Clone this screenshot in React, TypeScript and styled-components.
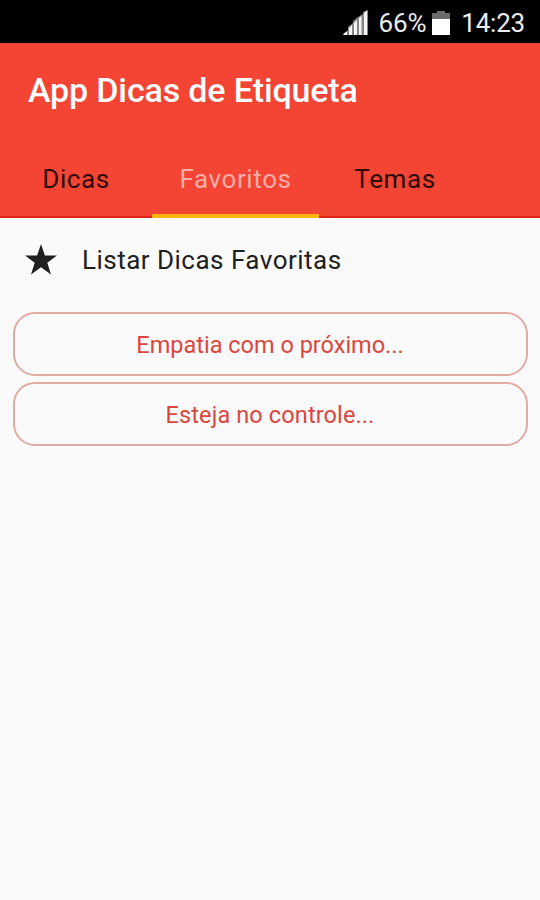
import React from "react";
import styled, { createGlobalStyle } from "styled-components";

const GlobalStyle = createGlobalStyle`
  * { box-sizing: border-box; }
  body { margin: 0; background: #fafafa; font-family: Roboto, "Liberation Sans", sans-serif; }
`;

const Screen = styled.div`
  display: flex;
  flex-direction: column;
  width: 540px;
  height: 900px;
  background: #fafafa;
  overflow: hidden;
`;

const StatusBar = styled.div`
  display: flex;
  align-items: center;
  justify-content: flex-end;
  height: 43px;
  padding: 3px 15px 0 0;
  background: #000;
  color: #ececec;
  font-size: 26px;
  line-height: 40px;
  white-space: nowrap;
`;

const Signal = styled.svg`
  width: 25px;
  height: 26px;
  margin: -1px 11px 0 0;
`;

const Battery = styled.svg`
  width: 18px;
  height: 26px;
  margin: -1px 11px 0 6px;
`;

const StatusText = styled.span`
  letter-spacing: -0.2px;
`;

const Header = styled.header`
  display: flex;
  flex-direction: column;
  height: 175px;
  background: #f44434;
`;

const Title = styled.h1`
  margin: 0;
  padding-left: 28px;
  height: 97px;
  color: #fff;
  font-size: 34px;
  font-weight: 500;
  letter-spacing: -0.15px;
  line-height: 95px;
  white-space: nowrap;
`;

const Tabs = styled.nav`
  display: flex;
  flex: 1;
  box-shadow: inset 0 -2px #de2412;
`;

const Tab = styled.button<{ $active?: boolean; $width: number }>`
  width: ${(p) => p.$width}px;
  height: 78px;
  padding: 5px 0 0;
  border: 0;
  border-bottom: 4px solid ${(p) => (p.$active ? "#ffb40e" : "transparent")};
  background: none;
  color: ${(p) => (p.$active ? "#fbaea7" : "#2b0c09")};
  font: 400 26px/69px Roboto, sans-serif;
  letter-spacing: 0.6px;
  text-align: center;
`;

const ListHeading = styled.div`
  display: flex;
  align-items: center;
  height: 84px;
  padding-left: 24px;
  gap: 24px;
  color: #202020;
  font-size: 26px;
  letter-spacing: 0.48px;
  white-space: nowrap;
`;

const Star = styled.svg`
  width: 34px;
  height: 34px;
`;

const Tips = styled.main`
  display: flex;
  flex-direction: column;
  gap: 6px;
  padding: 10px 12px 0 13px;
`;

const Tip = styled.button<{ $tracking: number }>`
  height: 64px;
  padding: 2px 1px 0 0;
  border: 2px solid #e0aaa5;
  border-radius: 22px;
  background: none;
  color: #db473e;
  font: 400 23.5px/58px Roboto, sans-serif;
  letter-spacing: ${(p) => p.$tracking}px;
`;

export default function App() {
  return (
    <>
      <GlobalStyle />
      <Screen>
        <StatusBar>
          <Signal viewBox="0 0 25 26">
            <path d="M0 25V24L5 20V17L10 13V11L15 7L20 4V2L25 0V25Z" fill="#858585" />
            <path d="M1 25V23.5L4 21.5V25ZM6 25V18L9 15V25ZM11 25V13L14 10V25ZM16 25V8L18.5 6V25ZM21 25V3L24 0.5V25Z" fill="#f4f4f4" />
          </Signal>
          <StatusText>66%</StatusText>
          <Battery viewBox="0 0 18 26">
            <path d="M0 3H5V1H13V3H18V9H0Z" fill="#6b6b6b" />
            <path d="M0 9H18V25H0Z" fill="#fff" />
          </Battery>
          <StatusText>14:23</StatusText>
        </StatusBar>
        <Header>
          <Title>App Dicas de Etiqueta</Title>
          <Tabs>
            <Tab $width={152}>Dicas</Tab>
            <Tab $width={167} $active>Favoritos</Tab>
            <Tab $width={152}>Temas</Tab>
          </Tabs>
        </Header>
        <ListHeading>
          <Star viewBox="0 0 34 34">
            <path d="M17 1 20.9 12.5H33L23.3 19.7 27 31.5 17 24.3 7 31.5 10.7 19.7 1 12.5H13.1Z" fill="#202020" />
          </Star>
          <span>Listar Dicas Favoritas</span>
        </ListHeading>
        <Tips>
          <Tip $tracking={0}>Empatia com o próximo...</Tip>
          <Tip $tracking={0.12}>Esteja no controle...</Tip>
        </Tips>
      </Screen>
    </>
  );
}
